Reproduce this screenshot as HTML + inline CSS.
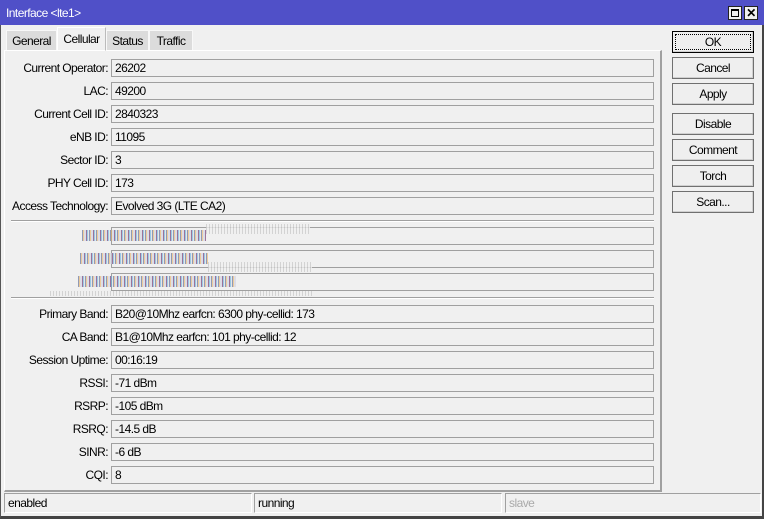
<!DOCTYPE html>
<html><head><meta charset="utf-8"><style>
*{box-sizing:border-box;margin:0;padding:0}
body{width:764px;height:519px;background:#f0f0f0;font-family:"Liberation Sans",sans-serif;font-size:12px;letter-spacing:-0.55px;color:#000;position:relative;overflow:hidden}
.win{position:absolute;left:0;top:0;width:764px;height:519px;border:1px solid #555;border-bottom:3px solid #444;border-right:2px solid #444}
.title{position:absolute;left:0;top:0;width:764px;height:25px;background:#5050c8;color:#fff;line-height:27px;padding-left:6px}
.tb{position:absolute;top:6px;width:14px;height:14px;background:#f0f0f0;border:1px solid #222}
.tab{position:absolute;top:30px;height:20px;background:#dcdcdc;border:1px solid #f8f8f8;border-bottom:none;line-height:21px;text-align:center}
.tab.act{top:27px;height:24px;background:#f0f0f0;border:1px solid #fff;border-right:1px solid #bbb;z-index:2;line-height:23px}
.panel{position:absolute;left:4px;top:50px;width:658px;height:442px;border:1px solid #fff;border-right:2px solid #a0a0a0;border-bottom:2px solid #a0a0a0}
.lbl{position:absolute;width:108px;text-align:right;height:18px;line-height:18px;left:0}
.fld{position:absolute;left:111px;width:543px;height:18px;border:1px solid #a0a0a0;background:#f0f0f0;line-height:16px;padding-left:3px}
.sep{position:absolute;left:11px;width:643px;height:2px;border-top:1px solid #a0a0a0;border-bottom:1px solid #fff}
.btn{position:absolute;left:672px;width:82px;height:22px;border:1px solid #707070;background:#efefef;text-align:center;line-height:20px;box-shadow:inset -1px -1px 0 #d0d0d0}
.st{position:absolute;top:493px;height:20px;border:1px solid #a0a0a0;border-right-color:#fff;border-bottom-color:#fff;line-height:19px;padding-left:3px}
.blur{position:absolute;height:11px;background:repeating-linear-gradient(90deg,#506090 0 1px,#e8b060 1px 2px,#d0d0e0 2px 4px,#602060 4px 5px,#60b0e0 5px 6px,#e0e0e0 6px 7px);opacity:.6}
.blurg{position:absolute;height:10px;background:repeating-linear-gradient(90deg,#ccc 0 1px,#f0f0f0 1px 3px);opacity:.8}
</style></head><body>
<div class="win"></div>
<div class="title">Interface &lt;lte1&gt;</div>
<div class="tb" style="left:728px"><div style="position:absolute;left:2px;top:2px;width:8px;height:8px;border:1px solid #000;border-top-width:2px"></div></div>
<div class="tb" style="left:744px;font-weight:bold;font-size:12px;line-height:12px;text-align:center">✕</div>

<div class="tab" style="left:6px;width:51px">General</div>
<div class="tab act" style="left:57px;width:49px">Cellular</div>
<div class="tab" style="left:106px;width:43px">Status</div>
<div class="tab" style="left:149px;width:44px">Traffic</div>

<div class="panel"></div>

<div id="rows"></div>

<div class="sep" style="top:220px"></div>
<div class="sep" style="top:297px"></div>

<div class="fld" style="top:227px"></div>
<div class="fld" style="top:250px"></div>
<div class="fld" style="top:273px"></div>
<div class="blur" style="left:82px;top:230px;width:124px"></div>
<div class="blurg" style="left:206px;top:224px;width:104px"></div>
<div class="blur" style="left:80px;top:253px;width:128px"></div>
<div class="blurg" style="left:208px;top:262px;width:104px"></div>
<div class="blur" style="left:78px;top:276px;width:158px"></div>
<div class="blurg" style="left:50px;top:291px;width:262px;height:5px"></div>

<div class="btn" style="top:31px;border:1px solid #000;outline:1px dotted #000;outline-offset:-4px">OK</div>
<div class="btn" style="top:57px">Cancel</div>
<div class="btn" style="top:83px">Apply</div>
<div class="btn" style="top:113px">Disable</div>
<div class="btn" style="top:139px">Comment</div>
<div class="btn" style="top:165px">Torch</div>
<div class="btn" style="top:191px">Scan...</div>

<div class="st" style="left:4px;width:248px">enabled</div>
<div class="st" style="left:254px;width:248px">running</div>
<div class="st" style="left:505px;width:256px;color:#aaa">slave</div>

<script>
var a=[["Current Operator:","26202",59],["LAC:","49200",82],["Current Cell ID:","2840323",105],["eNB ID:","11095",128],["Sector ID:","3",151],["PHY Cell ID:","173",174],["Access Technology:","Evolved 3G (LTE CA2)",197],
["Primary Band:","B20@10Mhz earfcn: 6300 phy-cellid: 173",305],["CA Band:","B1@10Mhz earfcn: 101 phy-cellid: 12",328],["Session Uptime:","00:16:19",351],["RSSI:","-71 dBm",374],["RSRP:","-105 dBm",397],["RSRQ:","-14.5 dB",420],["SINR:","-6 dB",443],["CQI:","8",466]];
var h="";a.forEach(function(r){h+='<div class="lbl" style="top:'+r[2]+'px">'+r[0]+'</div><div class="fld" style="top:'+r[2]+'px">'+r[1]+'</div>';});
document.getElementById("rows").innerHTML=h;
</script>
</body></html>
